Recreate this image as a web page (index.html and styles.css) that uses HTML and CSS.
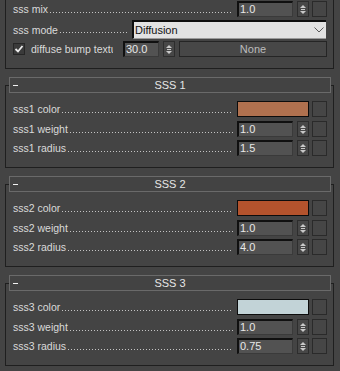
FILE: index.html
```html
<!DOCTYPE html>
<html>
<head>
<meta charset="utf-8">
<link rel="stylesheet" href="styles.css">
</head>
<body>
<div class="panel top">
  <div class="row r-mix">
    <span class="label">sss mix</span><span class="dots"></span>
    <span class="ctl"><span class="num">1.0</span><span class="spin"><svg width="10" height="14" viewBox="0 0 10 14"><polygon points="2,6 8,6 5,3" /><rect x="3" y="7" width="4" height="1" /><polygon points="2,9 8,9 5,12" /></svg></span></span>
    <span class="sq"></span>
  </div>
  <div class="row r-mode">
    <span class="label">sss mode</span><span class="dots short"></span>
    <span class="select">Diffusion<svg class="chev" width="10" height="6" viewBox="0 0 10 6"><polyline points="0.5,0.5 5,5 9.5,0.5" /></svg></span>
  </div>
  <div class="row r-bump">
    <span class="check"><svg width="10" height="10" viewBox="0 0 10 10"><polyline points="1.5,5 4,7.5 8.5,2" /></svg></span>
    <span class="label clip">diffuse bump texture</span>
    <span class="num small">30.0</span><span class="spin"><svg width="10" height="14" viewBox="0 0 10 14"><polygon points="2,6 8,6 5,3" /><rect x="3" y="7" width="4" height="1" /><polygon points="2,9 8,9 5,12" /></svg></span>
    <span class="btn">None</span>
  </div>
</div>

<div class="rollout">
  <div class="head"><span class="minus"></span><span class="title">SSS 1</span></div>
  <div class="panel body">
    <div class="row r-color">
      <span class="label">sss1 color</span><span class="dots"></span>
      <span class="swatch c1"></span><span class="sq"></span>
    </div>
    <div class="row r-w">
      <span class="label">sss1 weight</span><span class="dots"></span>
      <span class="ctl"><span class="num">1.0</span><span class="spin"><svg width="10" height="14" viewBox="0 0 10 14"><polygon points="2,6 8,6 5,3" /><rect x="3" y="7" width="4" height="1" /><polygon points="2,9 8,9 5,12" /></svg></span></span>
      <span class="sq"></span>
    </div>
    <div class="row r-r">
      <span class="label">sss1 radius</span><span class="dots"></span>
      <span class="ctl"><span class="num">1.5</span><span class="spin"><svg width="10" height="14" viewBox="0 0 10 14"><polygon points="2,6 8,6 5,3" /><rect x="3" y="7" width="4" height="1" /><polygon points="2,9 8,9 5,12" /></svg></span></span>
      <span class="sq"></span>
    </div>
  </div>
</div>

<div class="rollout">
  <div class="head"><span class="minus"></span><span class="title">SSS 2</span></div>
  <div class="panel body">
    <div class="row r-color">
      <span class="label">sss2 color</span><span class="dots"></span>
      <span class="swatch c2"></span><span class="sq"></span>
    </div>
    <div class="row r-w">
      <span class="label">sss2 weight</span><span class="dots"></span>
      <span class="ctl"><span class="num">1.0</span><span class="spin"><svg width="10" height="14" viewBox="0 0 10 14"><polygon points="2,6 8,6 5,3" /><rect x="3" y="7" width="4" height="1" /><polygon points="2,9 8,9 5,12" /></svg></span></span>
      <span class="sq"></span>
    </div>
    <div class="row r-r">
      <span class="label">sss2 radius</span><span class="dots"></span>
      <span class="ctl"><span class="num">4.0</span><span class="spin"><svg width="10" height="14" viewBox="0 0 10 14"><polygon points="2,6 8,6 5,3" /><rect x="3" y="7" width="4" height="1" /><polygon points="2,9 8,9 5,12" /></svg></span></span>
      <span class="sq"></span>
    </div>
  </div>
</div>

<div class="rollout">
  <div class="head"><span class="minus"></span><span class="title">SSS 3</span></div>
  <div class="panel body">
    <div class="row r-color">
      <span class="label">sss3 color</span><span class="dots"></span>
      <span class="swatch c3"></span><span class="sq"></span>
    </div>
    <div class="row r-w">
      <span class="label">sss3 weight</span><span class="dots"></span>
      <span class="ctl"><span class="num">1.0</span><span class="spin"><svg width="10" height="14" viewBox="0 0 10 14"><polygon points="2,6 8,6 5,3" /><rect x="3" y="7" width="4" height="1" /><polygon points="2,9 8,9 5,12" /></svg></span></span>
      <span class="sq"></span>
    </div>
    <div class="row r-r">
      <span class="label">sss3 radius</span><span class="dots"></span>
      <span class="ctl"><span class="num">0.75</span><span class="spin"><svg width="10" height="14" viewBox="0 0 10 14"><polygon points="2,6 8,6 5,3" /><rect x="3" y="7" width="4" height="1" /><polygon points="2,9 8,9 5,12" /></svg></span></span>
      <span class="sq"></span>
    </div>
  </div>
</div>
</body>
</html>
```

FILE: styles.css
```css
html, body {
  margin: 0;
  padding: 0;
}
body {
  width: 340px;
  height: 371px;
  overflow: hidden;
  background: #444444;
  font-family: "Liberation Sans", Arial, sans-serif;
  font-size: 10.5px;
  color: #dadada;
}
.panel {
  margin: 0 6px 0 5px;
  border: 1px solid #1f1f1f;
  padding: 0 6px 0 7px;
}
.top {
  border-top: none;
  padding-top: 1px;
  padding-bottom: 11px;
}
.row {
  display: flex;
  align-items: center;
  height: 16px;
}
.label {
  white-space: nowrap;
  line-height: 16px;
}
.dots {
  flex: 1;
  height: 1px;
  margin: 6px 4px 0 2px;
  background-image: linear-gradient(to right, #c4c4c4 1px, transparent 1px);
  background-size: 3px 1px;
}
.dots.short {
  margin-right: 5px;
}
.ctl {
  display: flex;
  width: 72px;
  height: 16px;
  justify-content: space-between;
}
.num {
  box-sizing: border-box;
  width: 56px;
  height: 16px;
  background: #525252;
  border-top: 2px solid #101010;
  border-left: 2px solid #101010;
  border-right: 1px solid #3a3a3a;
  border-bottom: 1px solid #3a3a3a;
  color: #e8e8e8;
  font-size: 11px;
  line-height: 13px;
  padding-left: 1px;
}
.num.small {
  width: 36px;
  margin-left: 10px;
}
.spin {
  box-sizing: border-box;
  width: 12px;
  height: 16px;
  border: 1px solid #2d2d2d;
  background: #474747;
  display: flex;
}
.spin svg {
  fill: #c9c9c9;
}
.r-bump .spin {
  margin-left: 4px;
}
.sq {
  box-sizing: border-box;
  width: 15px;
  height: 16px;
  margin-left: 3px;
  border: 1px solid #2a2a2a;
  background: #464646;
}
.r-mix {
  height: 16px;
}
.r-mode {
  height: 19px;
  margin-top: 3px;
}
.select {
  box-sizing: border-box;
  width: 194px;
  height: 19px;
  margin-right: 1px;
  background: #e2e2e2;
  border-top: 2px solid #0e0e0e;
  border-left: 2px solid #0e0e0e;
  border-bottom: 1px solid #9a9a9a;
  color: #111;
  font-size: 11px;
  line-height: 16px;
  padding-left: 1px;
  display: flex;
  align-items: center;
  justify-content: space-between;
}
.chev {
  fill: none;
  stroke: #5a5a5a;
  stroke-width: 1;
  margin-right: 2px;
}
.r-bump {
  margin-top: 2px;
}
.check {
  box-sizing: border-box;
  width: 12px;
  height: 12px;
  background: #3a3a3a;
  border: 1px solid #262626;
  display: flex;
  align-items: center;
  justify-content: center;
}
.check svg {
  fill: none;
  stroke: #ececec;
  stroke-width: 1.8;
}
.label.clip {
  width: 82px;
  overflow: hidden;
  margin-left: 6px;
}
.btn {
  box-sizing: border-box;
  flex: 1;
  margin-left: 4px;
  height: 16px;
  border: 1px solid #252525;
  background: #474747;
  color: #bcbcbc;
  text-align: center;
  line-height: 14px;
  font-size: 11px;
}
.rollout {
  margin-top: 8px;
}
.head {
  position: relative;
  z-index: 1;
  box-sizing: border-box;
  height: 16px;
  margin: 0 9px;
  border: 1px solid #6a6a6a;
  background: #434343;
  display: flex;
  align-items: center;
}
.minus {
  width: 5px;
  height: 1px;
  background: #f2f2f2;
  margin-left: 3px;
}
.title {
  flex: 1;
  text-align: center;
  color: #e6e6e6;
  font-size: 11px;
  margin-right: 8px;
  line-height: 14px;
}
.body {
  margin-top: -8px;
  padding-top: 15px;
  padding-bottom: 11px;
}
.r-w {
  margin-top: 4px;
}
.r-r {
  margin-top: 3px;
}
.swatch {
  box-sizing: border-box;
  width: 72px;
  height: 16px;
  border: 1px solid #0c0c0c;
}
.c1 { background: #b0714f; }
.c2 { background: #b4532d; }
.c3 { background: #c2d3d7; }
```
